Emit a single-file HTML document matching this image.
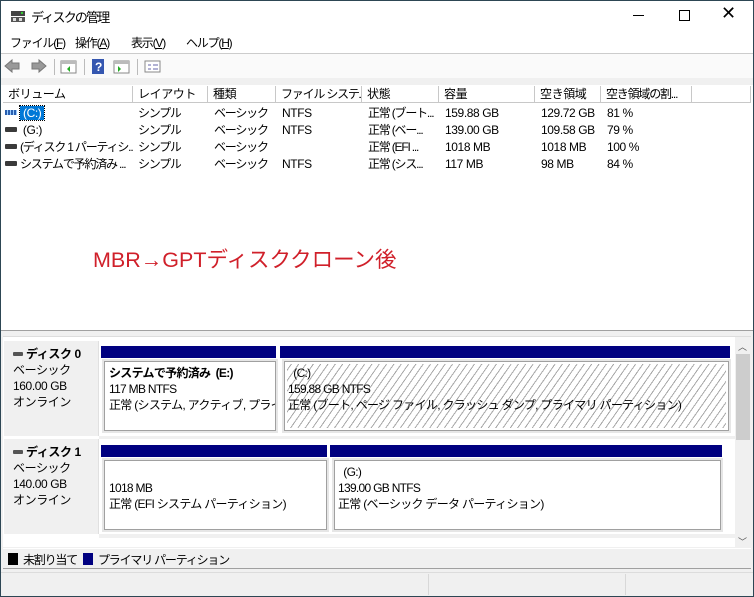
<!DOCTYPE html>
<html><head><meta charset="utf-8"><style>
*{margin:0;padding:0;box-sizing:border-box}
body{width:754px;height:597px;overflow:hidden;background:#fff;font-family:"Liberation Sans","Noto Sans CJK JP",sans-serif;font-size:12px;color:#000;position:relative;letter-spacing:-0.4px}
.a{position:absolute;white-space:nowrap}
.blue{position:absolute;background:#000080;height:12px}
.box{position:absolute;background:#fff;border:1px solid #a0a0a0;box-shadow:inset 0 0 0 2px #fff,0 0 0 2px #e6e6e6;padding:3px 0 0 3px;line-height:16px;white-space:nowrap;overflow:hidden;letter-spacing:-0.7px}
.hatch{background:repeating-linear-gradient(-55deg,#fff 0 5px,#a8a8a8 5px 6px)}
.hd{position:absolute;top:86px;height:17px;border-right:1px solid #c8c8c8;border-bottom:1px solid #c8c8c8;padding:1px 0 0 5px;line-height:15px;white-space:nowrap;overflow:hidden}
.col{position:absolute;top:105px;line-height:17px;white-space:nowrap;overflow:hidden}
.drv{display:inline-block;width:12px;height:5px;background:#3a3a3a;border-radius:1px;position:relative;top:-2px;margin-right:3px}
.m{letter-spacing:-1.2px}
</style></head><body>
<div class="a" style="left:0;top:0;width:754px;height:597px;border:1px solid #2d4654"></div>
<svg class="a" style="left:10px;top:9px" width="16" height="14"><rect x="1" y="2" width="14" height="5" fill="#444"/><rect x="11" y="3" width="2" height="2" fill="#3c3"/><rect x="1" y="8" width="14" height="5" fill="#555"/><rect x="3" y="9" width="3" height="3" fill="#ddd"/><rect x="9" y="9" width="3" height="3" fill="#ddd"/></svg>
<div class="a m" style="left:31px;top:7px;font-size:13px;letter-spacing:-1.8px">ディスクの管理</div>
<div class="a" style="left:633px;top:15px;width:11px;height:1px;background:#000"></div>
<div class="a" style="left:679px;top:10px;width:11px;height:11px;border:1px solid #000"></div>
<div class="a" style="left:721px;top:3px;font-size:18px;font-weight:100">✕</div>
<div class="a m" style="left:10px;top:34px">ファイル(<u>F</u>)</div>
<div class="a m" style="left:75px;top:34px">操作(<u>A</u>)</div>
<div class="a m" style="left:131px;top:34px">表示(<u>V</u>)</div>
<div class="a m" style="left:186px;top:34px">ヘルプ(<u>H</u>)</div>
<div class="a" style="left:1px;top:53px;width:752px;height:1px;background:#ccc"></div>
<div class="a" style="left:1px;top:54px;width:752px;height:24px;background:#fafafa"></div>
<svg class="a" style="left:4px;top:58px" width="160" height="18">
<path d="M1 8 L8 2 V5 H15 V11 H8 V14 Z" fill="#999" stroke="#777"/>
<path d="M42 8 L35 2 V5 H28 V11 H35 V14 Z" fill="#999" stroke="#777"/>
<rect x="50" y="1" width="1" height="16" fill="#bbb"/>
<rect x="57" y="3" width="15" height="12" fill="#fff" stroke="#888"/><rect x="57" y="3" width="15" height="3" fill="#bbb"/><path d="M66 8 l-3 3 l3 3z" fill="#2a2"/>
<rect x="80" y="1" width="1" height="16" fill="#bbb"/>
<rect x="88" y="1" width="12" height="15" fill="#3557b0"/><text x="91" y="13" fill="#fff" font-size="12" font-weight="bold" font-family="Liberation Sans">?</text>
<rect x="110" y="3" width="15" height="12" fill="#fff" stroke="#888"/><rect x="110" y="3" width="15" height="3" fill="#bbb"/><path d="M114 8 l3 3 l-3 3z" fill="#2a2"/>
<rect x="133" y="1" width="1" height="16" fill="#bbb"/>
<rect x="141" y="3" width="15" height="11" fill="#fff" stroke="#888"/><path d="M144 7h3M144 11h3M149 7h5M149 11h5" stroke="#66a"/>
</svg>
<div class="a" style="left:1px;top:78px;width:752px;height:7px;background:#f0f0f0"></div>
<div class="hd" style="left:3px;width:130px">ボリューム</div>
<div class="hd" style="left:133px;width:75px">レイアウト</div>
<div class="hd" style="left:208px;width:68px">種類</div>
<div class="hd m" style="left:276px;width:86px">ファイル システム</div>
<div class="hd" style="left:362px;width:77px">状態</div>
<div class="hd" style="left:439px;width:96px">容量</div>
<div class="hd" style="left:535px;width:66px">空き領域</div>
<div class="hd m" style="left:601px;width:91px">空き領域の割...</div>
<div class="hd" style="left:692px;width:59px"></div>
<div class="col" style="left:5px;width:128px;line-height:16px">
<div><span style="display:inline-block;width:12px;height:5px;background:repeating-linear-gradient(90deg,#2a5fb0 0 2px,#9cf 2px 3px);position:relative;top:-2px;margin-right:3px"></span><span style="background:#0078d7;color:#fff;padding:0 3px;outline:1px dotted #000">(C:)</span></div>
<div style="margin-top:1px"><span class="drv"></span> (G:)</div>
<div style="margin-top:1px" class="m"><span class="drv"></span>(ディスク 1 パーティシ...</div>
<div style="margin-top:1px" class="m"><span class="drv"></span>システムで予約済み ...</div>
</div>
<div class="col m" style="left:138px">シンプル<br>シンプル<br>シンプル<br>シンプル</div>
<div class="col m" style="left:214px">ベーシック<br>ベーシック<br>ベーシック<br>ベーシック</div>
<div class="col" style="left:282px">NTFS<br>NTFS<br><br>NTFS</div>
<div class="col m" style="left:368px;width:70px">正常 (ブート...<br>正常 (ベー...<br>正常 (EFI ...<br>正常 (シス...</div>
<div class="col" style="left:445px">159.88 GB<br>139.00 GB<br>1018 MB<br>117 MB</div>
<div class="col" style="left:541px">129.72 GB<br>109.58 GB<br>1018 MB<br>98 MB</div>
<div class="col" style="left:607px">81 %<br>79 %<br>100 %<br>84 %</div>
<div class="a" style="left:93px;top:243px;font-size:21.5px;color:#d0202a;letter-spacing:0px">MBR→GPTディスククローン後</div>
<div class="a" style="left:1px;top:330px;width:752px;height:1px;background:#a0a0a0"></div>
<div class="a" style="left:1px;top:331px;width:752px;height:265px;background:#f0f0f0"></div>
<div class="a" style="left:3px;top:336px;width:748px;height:211px;background:#fff;border-top:1px solid #ddd"></div>
<div class="a" style="left:4px;top:341px;width:95px;height:95px;background:#f0f0f0;border-right:1px solid #e0e0e0;padding:5px 0 0 9px;line-height:16px">
<div style="font-weight:bold"><span class="drv" style="width:10px;height:4px;background:#555"></span>ディスク 0</div>ベーシック<br>160.00 GB<br>オンライン</div>
<div class="a" style="left:99px;top:436px;width:636px;height:3px;background:#f0f0f0"></div>
<div class="blue" style="left:101px;top:346px;width:175px"></div>
<div class="blue" style="left:280px;top:346px;width:450px"></div>
<div class="box" style="left:104px;top:361px;width:172px;height:70px;padding-left:4px"><b>システムで予約済み &nbsp;(E:)</b><br>117 MB NTFS<br>正常 (システム, アクティブ, プライマリ</div>
<div class="box hatch" style="left:284px;top:361px;width:445px;height:70px;padding-left:3px"><span>&nbsp;&nbsp;(C:)</span><br>159.88 GB NTFS<br>正常 (ブート, ページ ファイル, クラッシュ ダンプ, プライマリ パーティション)</div>
<div class="a" style="left:4px;top:439px;width:95px;height:95px;background:#f0f0f0;border-right:1px solid #e0e0e0;padding:5px 0 0 9px;line-height:16px">
<div style="font-weight:bold"><span class="drv" style="width:10px;height:4px;background:#555"></span>ディスク 1</div>ベーシック<br>140.00 GB<br>オンライン</div>
<div class="a" style="left:99px;top:534px;width:636px;height:4px;background:#f0f0f0"></div>
<div class="blue" style="left:101px;top:445px;width:226px"></div>
<div class="blue" style="left:330px;top:445px;width:392px"></div>
<div class="box" style="left:104px;top:460px;width:223px;height:70px;padding-top:19px;padding-left:4px">1018 MB<br>正常 (EFI システム パーティション)</div>
<div class="box" style="left:334px;top:460px;width:387px;height:70px">&nbsp;&nbsp;(G:)<br>139.00 GB NTFS<br>正常 (ベーシック データ パーティション)</div>
<div class="a" style="left:735px;top:337px;width:16px;height:211px;background:#f0f0f0"></div>
<div class="a" style="left:736px;top:354px;width:14px;height:86px;background:#cdcdcd"></div>
<div class="a" style="left:738px;top:340px;font-size:9px;color:#555">︿</div>
<div class="a" style="left:738px;top:535px;font-size:9px;color:#555">﹀</div>
<div class="a" style="left:3px;top:548px;width:748px;height:21px;border-top:1px solid #fff;border-bottom:1px solid #a0a0a0"></div>
<div class="a" style="left:8px;top:553px;width:10px;height:12px;background:#000"></div>
<div class="a m" style="left:23px;top:551px">未割り当て</div>
<div class="a" style="left:83px;top:553px;width:10px;height:12px;background:#000080"></div>
<div class="a m" style="left:98px;top:551px">プライマリ パーティション</div>
<div class="a" style="left:1px;top:572px;width:752px;height:1px;background:#dcdcdc"></div>
<div class="a" style="left:428px;top:574px;width:1px;height:21px;background:#d8d8d8"></div>
<div class="a" style="left:625px;top:574px;width:1px;height:21px;background:#d8d8d8"></div>
</body></html>
